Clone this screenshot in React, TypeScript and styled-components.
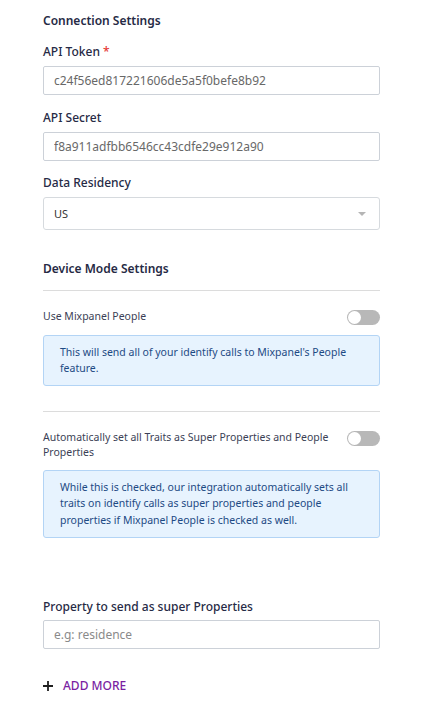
import { createGlobalStyle, styled } from "styled-components";

const GlobalStyle = createGlobalStyle`
  body {
    margin: 0;
    background: #ffffff;
    font-family: "Noto Sans", "Open Sans", sans-serif;
  }
`;

const Page = styled.div`
  width: 337px;
  padding: 12px 45px 0 43px;
  display: flex;
  flex-direction: column;
`;

const Heading = styled.h3<{ $top?: number }>`
  margin: ${(p) => p.$top ?? 0}px 0 0;
  font-size: 12px;
  line-height: 18px;
  font-weight: 600;
  color: #262a45;
`;

const Fields = styled.div`
  display: flex;
  flex-direction: column;
  gap: 13.5px;
  margin-top: 13px;
`;

const Field = styled.div`
  display: flex;
  flex-direction: column;
`;

const Label = styled.label<{ $gap?: number }>`
  font-size: 12px;
  line-height: 18px;
  font-weight: 500;
  color: #262a45;
  margin-bottom: ${(p) => p.$gap ?? 5}px;

  span {
    color: #e53935;
  }
`;

const Input = styled.input`
  box-sizing: border-box;
  height: 29px;
  width: 100%;
  padding: 0 10px;
  border: 1px solid #ccd1d8;
  border-radius: 2px;
  font-family: inherit;
  font-size: 12px;
  color: #686868;
  outline: none;

  &::placeholder {
    color: #8a8a8a;
  }
`;

const Select = styled.div`
  box-sizing: border-box;
  height: 33px;
  padding: 0 13px 0 10px;
  border: 1px solid #d6dade;
  border-radius: 3px;
  display: flex;
  align-items: center;
  justify-content: space-between;
  font-size: 11px;
  color: #333333;
`;

const Caret = styled.span`
  width: 0;
  height: 0;
  border-left: 4px solid transparent;
  border-right: 4px solid transparent;
  border-top: 4px solid #b5b5b5;
`;

const Divider = styled.hr<{ $top: number }>`
  margin: ${(p) => p.$top}px 0 0;
  border: none;
  border-top: 1px solid #dcdcdc;
`;

const ToggleRow = styled.div`
  margin-top: 18px;
  display: flex;
  justify-content: space-between;
  align-items: flex-start;
`;

const ToggleLabel = styled.div`
  max-width: 296px;
  font-size: 10.5px;
  line-height: 15px;
  color: #3b3f56;
`;

const Switch = styled.div`
  position: relative;
  flex-shrink: 0;
  width: 33px;
  height: 15px;
  border-radius: 8px;
  background: #b8b8b8;
  margin-top: 1px;

  &::after {
    content: "";
    position: absolute;
    left: 1px;
    top: 1px;
    width: 13px;
    height: 13px;
    border-radius: 50%;
    background: #ffffff;
  }
`;

const Info = styled.div`
  margin-top: 9.5px;
  padding: 8px 16px;
  border: 1px solid #b3d4f5;
  border-radius: 3px;
  background: #e7f3fe;
  font-size: 10.5px;
  line-height: 16.8px;
  color: #1d4a84;
`;

const Spacer = styled.div`
  height: 60px;
`;

const AddMore = styled.button`
  margin-top: 28.5px;
  padding: 0;
  border: none;
  background: none;
  display: flex;
  align-items: center;
  gap: 10px;
  font-family: inherit;
  font-size: 12px;
  line-height: 18px;
  font-weight: 500;
  color: #7b1fa2;
  cursor: pointer;
`;

const App = () => {
  return (
    <>
      <GlobalStyle />
      <Page>
        <Heading>Connection Settings</Heading>
        <Fields>
          <Field>
            <Label>
              API Token <span>*</span>
            </Label>
            <Input defaultValue="c24f56ed817221606de5a5f0befe8b92" />
          </Field>
          <Field>
            <Label>API Secret</Label>
            <Input defaultValue="f8a911adfbb6546cc43cdfe29e912a90" />
          </Field>
          <Field>
            <Label>Data Residency</Label>
            <Select>
              US
              <Caret />
            </Select>
          </Field>
        </Fields>

        <Heading $top={30}>Device Mode Settings</Heading>
        <Divider $top={12} />
        <ToggleRow>
          <ToggleLabel>Use Mixpanel People</ToggleLabel>
          <Switch />
        </ToggleRow>
        <Info>This will send all of your identify calls to Mixpanel's People feature.</Info>

        <Divider $top={25} />
        <ToggleRow>
          <ToggleLabel>
            Automatically set all Traits as Super Properties and People Properties
          </ToggleLabel>
          <Switch />
        </ToggleRow>
        <Info>
          While this is checked, our integration automatically sets all traits on identify
          calls as super properties and people properties if Mixpanel People is checked as
          well.
        </Info>

        <Spacer />
        <Field>
          <Label $gap={4}>Property to send as super Properties</Label>
          <Input placeholder="e.g: residence" />
        </Field>

        <AddMore>
          <svg width="10" height="10" viewBox="0 0 10 10">
            <path d="M5 0v10M0 5h10" stroke="#1f1f1f" strokeWidth="1.8" />
          </svg>
          ADD MORE
        </AddMore>
      </Page>
    </>
  );
};

export default App;
